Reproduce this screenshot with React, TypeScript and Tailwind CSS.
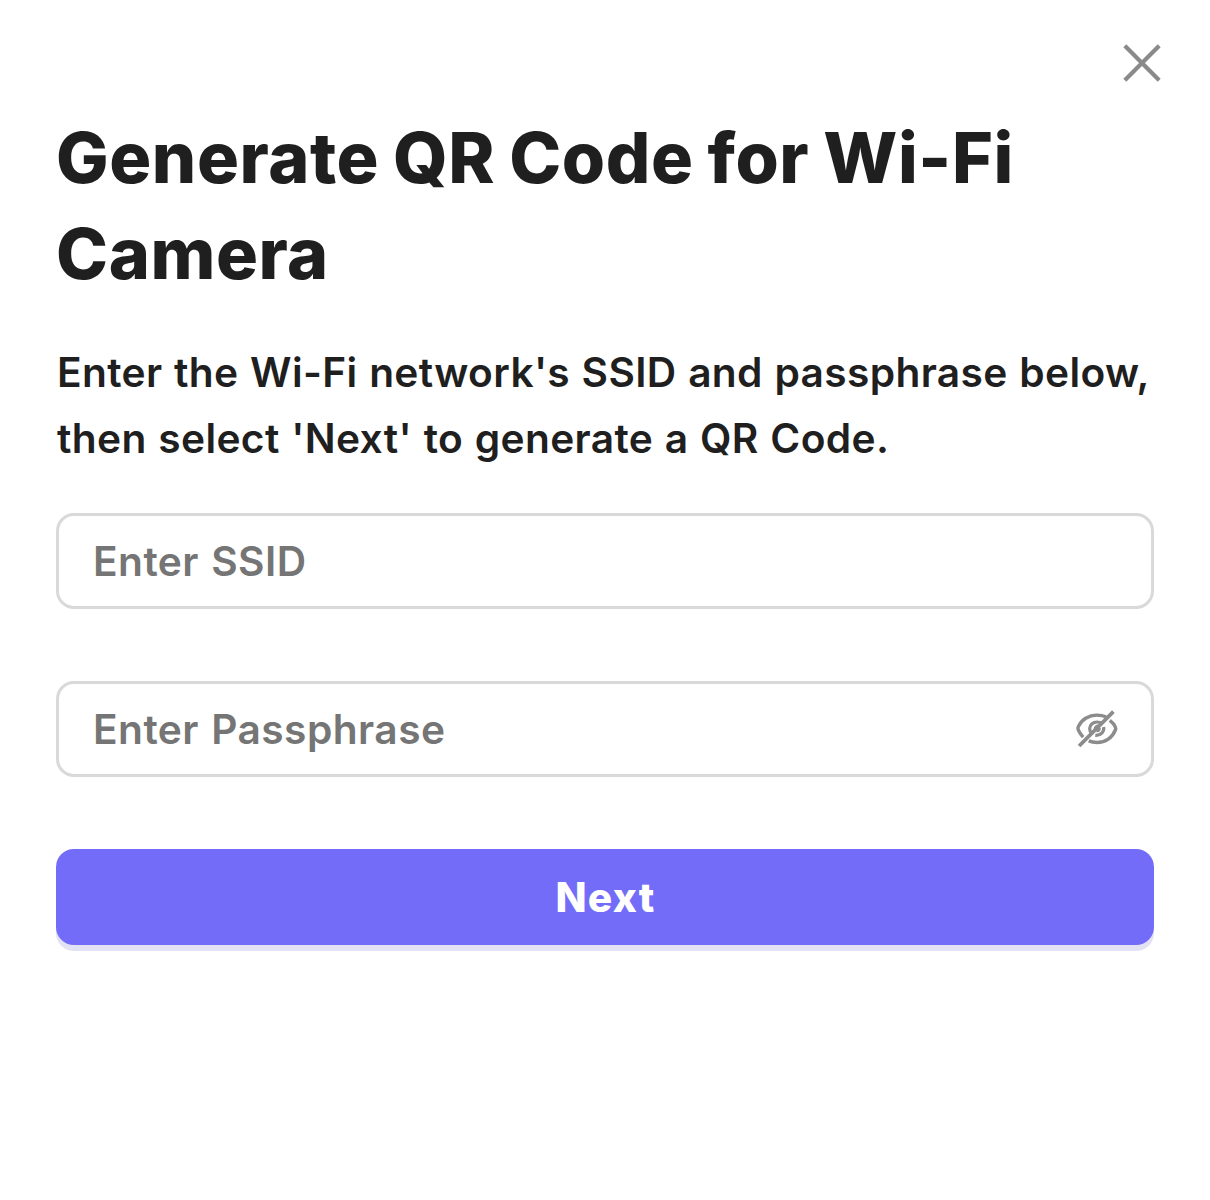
import { useState } from 'react';

const fields = [
  { name: 'ssid', label: 'Enter SSID', secret: false },
  { name: 'passphrase', label: 'Enter Passphrase', secret: true },
];

function CloseIcon() {
  return (
    <svg className="w-[38px] h-[38px]" viewBox="0 0 38 38" fill="none" stroke="currentColor" strokeWidth="4.2">
      <path d="M1.8 1.8L36.2 36.2M36.2 1.8L1.8 36.2" />
    </svg>
  );
}

function EyeOffIcon() {
  return (
    <svg className="w-[42px] h-[38px]" viewBox="0 0 42 38" fill="none" stroke="currentColor" strokeWidth="3.4">
      <path d="M30 6.8C27.2 5.6 24 5.1 21 5.1C12.5 5.1 5.5 9.8 2.4 16.6C1.9 17.6 1.8 18.4 2.2 19.6C3 22.3 4.8 24.6 7.2 27.2" />
      <path d="M33.8 10.4C36.4 12.4 38.4 14.8 39.4 17.2C39.9 18.3 39.9 19 39.4 20C36.4 27.5 29.5 32.5 21 32.5C18 32.5 15.3 32 12.7 30.9" />
      <path d="M26.2 13.6C24.8 12.6 23 12 21 12C16.8 12 13.7 15 13.7 18.6C13.7 20.2 14.2 21.8 15 23" strokeWidth="3.2" />
      <path d="M27.7 17C28.4 21.6 24.8 25.8 19.3 25.3" strokeWidth="3.2" />
      <path d="M23.2 15.8C20.8 15.3 18.7 17 18.7 19.4" strokeWidth="2.4" />
      <path d="M23.6 17.8C23.9 20 22.6 21.2 20.4 21" strokeWidth="2.4" />
      <path d="M37.4 1.6L3.1 36" strokeWidth="3.8" />
    </svg>
  );
}

export default function App() {
  const [visible, setVisible] = useState(false);

  return (
    <main className="min-h-screen bg-white px-14 pt-11 text-[#1f1f1f] font-[Inter,sans-serif]">
      <div className="flex justify-end -mr-[7px]">
        <button type="button" aria-label="Close" className="text-[#8a8a8a]">
          <CloseIcon />
        </button>
      </div>

      <h1 className="mt-[28px] text-[70px] leading-[96px] font-extrabold tracking-[0.58px] [word-spacing:-2px]">
        Generate QR Code for Wi-Fi
        <br />
        Camera
      </h1>
      <p className="mt-[38px] pl-px text-[40.7px] leading-[66px] font-[580] tracking-[0.35px] [word-spacing:1px] whitespace-nowrap">
        Enter the Wi-Fi network's SSID and passphrase below,
        <br />
        then select 'Next' to generate a QR Code.
      </p>

      <form className="mt-[41px] flex flex-col gap-[72px]" onSubmit={(e) => e.preventDefault()}>
        {fields.map((field) => (
          <div
            key={field.name}
            className="flex h-24 items-center rounded-[18px] border-3 border-[#d9d9d9] pl-[34px] pr-[33px]"
          >
            <input
              name={field.name}
              type={field.secret && !visible ? 'password' : 'text'}
              placeholder={field.label}
              className="min-w-0 flex-1 bg-transparent pt-0.5 text-[40.7px] font-[580] tracking-[0.45px] [word-spacing:1.5px] outline-none placeholder:text-[#757575]"
            />
            {field.secret && (
              <button
                type="button"
                aria-label="Show passphrase"
                className="text-[#8c8c8c]"
                onClick={() => setVisible(!visible)}
              >
                <EyeOffIcon />
              </button>
            )}
          </div>
        ))}
        <button
          type="submit"
          className="h-24 rounded-[18px] bg-[#736cf9] pt-0.5 pl-px text-[40.7px] font-extrabold tracking-[1.3px] text-white shadow-[0_6px_0_#e3e2f5]"
        >
          Next
        </button>
      </form>
    </main>
  );
}
